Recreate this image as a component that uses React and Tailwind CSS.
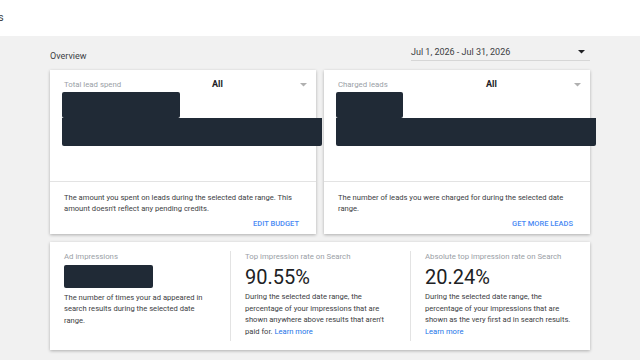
import React from 'react';

const Bar = ({ className }) => <div className={`bg-[#202a36] rounded-[2px] ${className}`} />;

const Caret = ({ className }) => (
    <svg width="7" height="4" viewBox="0 0 7 4" className={className}>
        <path d="M0 0 L7 0 L3.5 3.5 Z" fill="currentColor" />
    </svg>
);

const LeadCard = ({ label, shortBar, text, action }) => (
    <div className="bg-white shadow-[0_1px_3px_rgba(0,0,0,0.28)] h-[164px] flex flex-col">
        <div className="h-[112px] pt-[9px] pl-[12px] border-b border-[#e3e3e3]">
            <div className="flex items-center h-[12px] pl-[2px]">
                <span className="w-[148px] text-[7.8px] text-[#9aa0a6]">{label}</span>
                <span className="w-[88px] text-[9px] font-bold text-[#202124]">All</span>
                <Caret className="text-[#b0b0b0]" />
            </div>
            <Bar className={`mt-[1px] h-[26px] ${shortBar}`} />
            <Bar className="h-[28px] w-[260px] rounded-t-none" />
        </div>
        <div className="flex-1 pl-[14px] pr-[12px] pt-[10px] flex flex-col">
            <p className="text-[7.6px] leading-[11px] text-[#3c4043] h-[22px]">{text}</p>
            <div className="flex justify-end pr-[5px] mt-[5px]">
                <span className="text-[7.5px] leading-[10px] font-medium text-[#4a8af4]">{action}</span>
            </div>
        </div>
    </div>
);

const Metric = ({ label, children, text, link, border, pad = 'pr-[12px]' }) => (
    <div className={`pl-[14px] ${pad} ${border ? 'border-l border-[#e3e3e3]' : ''}`}>
        <div className="text-[7.8px] leading-[12px] text-[#9aa0a6]">{label}</div>
        {children}
        <p className="text-[7.6px] leading-[11.5px] text-[#3c4043]">
            {text}
            {link && <span className="text-[#1a73e8]"> Learn more</span>}
        </p>
    </div>
);

export default function App() {
    return (
        <div className="w-[640px] h-[360px] overflow-hidden font-['Roboto',sans-serif]">
            <div className="h-[36px] bg-white flex items-center">
                <span className="text-[11px] text-[#3c4043] -ml-[2px]">s</span>
            </div>
            <div className="bg-[#f1f1f1] h-[324px] pl-[50px]">
                <div className="w-[540px] h-[34px] flex justify-between">
                    <span className="text-[9px] leading-[12px] text-[#3c4043] mt-[14px]">Overview</span>
                    <div className="w-[179px] h-[25px] flex items-end justify-between border-b border-[#d6d6d6] pb-[2px] pr-[5px]">
                        <span className="text-[9px] leading-[12px] text-[#3c4043]">Jul 1, 2026 - Jul 31, 2026</span>
                        <Caret className="text-[#202124] mb-[4px]" />
                    </div>
                </div>
                <div className="w-[540px] grid grid-cols-2 gap-[8px]">
                    <LeadCard
                        label="Total lead spend"
                        shortBar="w-[118px]"
                        text="The amount you spent on leads during the selected date range. This amount doesn't reflect any pending credits."
                        action="EDIT BUDGET"
                    />
                    <LeadCard
                        label="Charged leads"
                        shortBar="w-[67px]"
                        text="The number of leads you were charged for during the selected date range."
                        action="GET MORE LEADS"
                    />
                </div>
                <div className="mt-[8px] w-[540px] h-[108px] bg-white shadow-[0_1px_3px_rgba(0,0,0,0.28)] grid grid-cols-3 py-[9px]">
                    <Metric
                        pad="pr-[24px]"
                        label="Ad impressions"
                        text="The number of times your ad appeared in search results during the selected date range."
                    >
                        <Bar className="mt-[1.5px] mb-[4px] h-[23px] w-[89px]" />
                    </Metric>
                    <Metric
                        border
                        label="Top impression rate on Search"
                        text="During the selected date range, the percentage of your impressions that are shown anywhere above results that aren't paid for."
                        link
                    >
                        <div className="text-[20px] leading-[24px] text-[#202124] mt-[2px] mb-[2px]">90.55%</div>
                    </Metric>
                    <Metric
                        border
                        label="Absolute top impression rate on Search"
                        text="During the selected date range, the percentage of your impressions that are shown as the very first ad in search results."
                        link
                    >
                        <div className="text-[20px] leading-[24px] text-[#202124] mt-[2px] mb-[2px]">20.24%</div>
                    </Metric>
                </div>
            </div>
        </div>
    );
}
